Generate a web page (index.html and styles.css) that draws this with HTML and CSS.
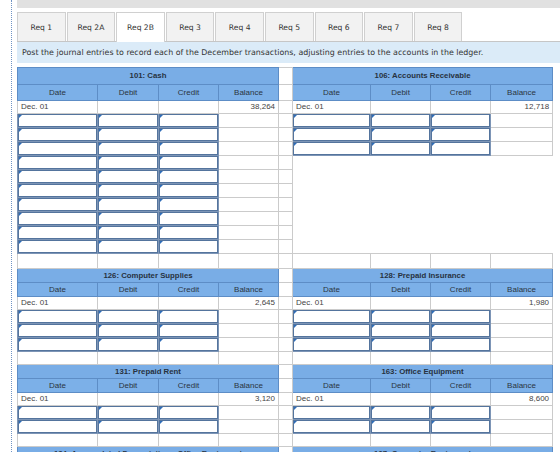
FILE: index.html
```html
<!DOCTYPE html>
<html lang="en">
<head>
    <meta charset="UTF-8">
    <title>General Ledger</title>
    <link rel="stylesheet" href="styles.css">
</head>
<body>
<div class="page">
    <div class="topbar"></div>
    <div class="tabs">
        <div class="tab">Req 1</div>
        <div class="tab">Req 2A</div>
        <div class="tab active">Req 2B</div>
        <div class="tab">Req 3</div>
        <div class="tab">Req 4</div>
        <div class="tab">Req 5</div>
        <div class="tab">Req 6</div>
        <div class="tab">Req 7</div>
        <div class="tab">Req 8</div>
    </div>
    <div class="instr">Post the journal entries to record each of the December transactions, adjusting entries to the accounts in the ledger.</div>

    <table class="ledger">
        <colgroup>
            <col style="width:80px"><col style="width:61px"><col style="width:60px"><col style="width:60px">
            <col style="width:14px">
            <col style="width:78px"><col style="width:60px"><col style="width:60px"><col style="width:62px">
        </colgroup>

        <!-- 101 / 106 -->
        <tr class="r-title first">
            <td class="title" colspan="4">101: Cash</td><td class="sp"></td><td class="title" colspan="4">106: Accounts Receivable</td>
        </tr>
        <tr class="r-head first">
            <th>Date</th><th>Debit</th><th>Credit</th><th>Balance</th><td class="sp"></td><th>Date</th><th>Debit</th><th>Credit</th><th>Balance</th>
        </tr>
        <tr class="r-open">
            <td>Dec. 01</td><td></td><td></td><td class="num">38,264</td><td class="sp"></td><td>Dec. 01</td><td></td><td></td><td class="num">12,718</td>
        </tr>
        <tr class="r-in">
            <td class="in"><span class="inp"></span></td><td class="in"><span class="inp"></span></td><td class="in"><span class="inp"></span></td><td></td><td class="sp"></td>
            <td class="in"><span class="inp"></span></td><td class="in"><span class="inp"></span></td><td class="in"><span class="inp"></span></td><td></td>
        </tr>
        <tr class="r-in">
            <td class="in"><span class="inp"></span></td><td class="in"><span class="inp"></span></td><td class="in"><span class="inp"></span></td><td></td><td class="sp"></td>
            <td class="in"><span class="inp"></span></td><td class="in"><span class="inp"></span></td><td class="in"><span class="inp"></span></td><td></td>
        </tr>
        <tr class="r-in">
            <td class="in"><span class="inp"></span></td><td class="in"><span class="inp"></span></td><td class="in"><span class="inp"></span></td><td></td><td class="sp"></td>
            <td class="in"><span class="inp"></span></td><td class="in"><span class="inp"></span></td><td class="in"><span class="inp"></span></td><td></td>
        </tr>
        <tr class="r-in">
            <td class="in"><span class="inp"></span></td><td class="in"><span class="inp"></span></td><td class="in"><span class="inp"></span></td><td></td><td class="sp"></td>
            <td class="none" colspan="4"></td>
        </tr>
        <tr class="r-in">
            <td class="in"><span class="inp"></span></td><td class="in"><span class="inp"></span></td><td class="in"><span class="inp"></span></td><td></td><td class="sp"></td>
            <td class="none" colspan="4"></td>
        </tr>
        <tr class="r-in">
            <td class="in"><span class="inp"></span></td><td class="in"><span class="inp"></span></td><td class="in"><span class="inp"></span></td><td></td><td class="sp"></td>
            <td class="none" colspan="4"></td>
        </tr>
        <tr class="r-in">
            <td class="in"><span class="inp"></span></td><td class="in"><span class="inp"></span></td><td class="in"><span class="inp"></span></td><td></td><td class="sp"></td>
            <td class="none" colspan="4"></td>
        </tr>
        <tr class="r-in">
            <td class="in"><span class="inp"></span></td><td class="in"><span class="inp"></span></td><td class="in"><span class="inp"></span></td><td></td><td class="sp"></td>
            <td class="none" colspan="4"></td>
        </tr>
        <tr class="r-in">
            <td class="in"><span class="inp"></span></td><td class="in"><span class="inp"></span></td><td class="in"><span class="inp"></span></td><td></td><td class="sp"></td>
            <td class="none" colspan="4"></td>
        </tr>
        <tr class="r-in">
            <td class="in"><span class="inp"></span></td><td class="in"><span class="inp"></span></td><td class="in"><span class="inp"></span></td><td></td><td class="sp"></td>
            <td class="none" colspan="4"></td>
        </tr>
        <tr class="r-blank first">
            <td></td><td></td><td></td><td></td><td class="sp"></td><td></td><td></td><td></td><td></td>
        </tr>

        <!-- 126 / 128 -->
        <tr class="r-title">
            <td class="title" colspan="4">126: Computer Supplies</td><td class="sp"></td><td class="title" colspan="4">128: Prepaid Insurance</td>
        </tr>
        <tr class="r-head">
            <th>Date</th><th>Debit</th><th>Credit</th><th>Balance</th><td class="sp"></td><th>Date</th><th>Debit</th><th>Credit</th><th>Balance</th>
        </tr>
        <tr class="r-open">
            <td>Dec. 01</td><td></td><td></td><td class="num">2,645</td><td class="sp"></td><td>Dec. 01</td><td></td><td></td><td class="num">1,980</td>
        </tr>
        <tr class="r-in">
            <td class="in"><span class="inp"></span></td><td class="in"><span class="inp"></span></td><td class="in"><span class="inp"></span></td><td></td><td class="sp"></td>
            <td class="in"><span class="inp"></span></td><td class="in"><span class="inp"></span></td><td class="in"><span class="inp"></span></td><td></td>
        </tr>
        <tr class="r-in">
            <td class="in"><span class="inp"></span></td><td class="in"><span class="inp"></span></td><td class="in"><span class="inp"></span></td><td></td><td class="sp"></td>
            <td class="in"><span class="inp"></span></td><td class="in"><span class="inp"></span></td><td class="in"><span class="inp"></span></td><td></td>
        </tr>
        <tr class="r-in">
            <td class="in"><span class="inp"></span></td><td class="in"><span class="inp"></span></td><td class="in"><span class="inp"></span></td><td></td><td class="sp"></td>
            <td class="in"><span class="inp"></span></td><td class="in"><span class="inp"></span></td><td class="in"><span class="inp"></span></td><td></td>
        </tr>
        <tr class="r-blank">
            <td></td><td></td><td></td><td></td><td class="sp"></td><td></td><td></td><td></td><td></td>
        </tr>

        <!-- 131 / 163 -->
        <tr class="r-title">
            <td class="title" colspan="4">131: Prepaid Rent</td><td class="sp"></td><td class="title" colspan="4">163: Office Equipment</td>
        </tr>
        <tr class="r-head">
            <th>Date</th><th>Debit</th><th>Credit</th><th>Balance</th><td class="sp"></td><th>Date</th><th>Debit</th><th>Credit</th><th>Balance</th>
        </tr>
        <tr class="r-open">
            <td>Dec. 01</td><td></td><td></td><td class="num">3,120</td><td class="sp"></td><td>Dec. 01</td><td></td><td></td><td class="num">8,600</td>
        </tr>
        <tr class="r-in">
            <td class="in"><span class="inp"></span></td><td class="in"><span class="inp"></span></td><td class="in"><span class="inp"></span></td><td></td><td class="sp"></td>
            <td class="in"><span class="inp"></span></td><td class="in"><span class="inp"></span></td><td class="in"><span class="inp"></span></td><td></td>
        </tr>
        <tr class="r-in">
            <td class="in"><span class="inp"></span></td><td class="in"><span class="inp"></span></td><td class="in"><span class="inp"></span></td><td></td><td class="sp"></td>
            <td class="in"><span class="inp"></span></td><td class="in"><span class="inp"></span></td><td class="in"><span class="inp"></span></td><td></td>
        </tr>
        <tr class="r-blank">
            <td></td><td></td><td></td><td></td><td class="sp"></td><td></td><td></td><td></td><td></td>
        </tr>

        <!-- 134 / 167 -->
        <tr class="r-title">
            <td class="title" colspan="4">134: Accumulated Depreciation—Office Equipment</td><td class="sp"></td><td class="title" colspan="4">167: Computer Equipment</td>
        </tr>
        <tr class="r-head">
            <th>Date</th><th>Debit</th><th>Credit</th><th>Balance</th><td class="sp"></td><th>Date</th><th>Debit</th><th>Credit</th><th>Balance</th>
        </tr>
    </table>
</div>
</body>
</html>
```

FILE: styles.css
```css
html, body {
    margin: 0;
    background: #fff;
    overflow: hidden;
}
body {
    font-family: "Liberation Sans", Arial, sans-serif;
    color: #333;
}
.page {
    margin-left: 11px;
    padding-left: 5px;
    border-left: 1px dotted #6f93c4;
    min-height: 600px;
}
.topbar {
    height: 8px;
    background: #e1e1e1;
}
.tabs {
    display: flex;
    gap: 1px;
    margin-top: 4px;
    height: 29px;
    border-bottom: 1px solid #c6c6c6;
}
.tab {
    width: 48.6px;
    box-sizing: border-box;
    border: 1px solid #d0d0d0;
    border-bottom: none;
    background: #f2f2f2;
    display: flex;
    align-items: center;
    justify-content: center;
    font-family: "DejaVu Sans", Verdana, sans-serif;
    font-size: 7.6px;
    color: #333;
}
.tab.active {
    background: #fff;
    height: 30px; /* covers the line under the tabs */
}
.instr {
    height: 21px;
    background: #dbebf8;
    padding-left: 5px;
    display: flex;
    align-items: center;
    font-family: "DejaVu Sans", Verdana, sans-serif;
    font-size: 7.9px;
    color: #333;
}
.ledger {
    margin-top: 4px;
    width: 535px;
    table-layout: fixed;
    border-collapse: collapse;
}
.ledger td, .ledger th {
    border: 1px solid #cbcbcb;
    padding: 0 3px;
    font-size: 8px;
    line-height: 1;
    white-space: nowrap;
    overflow: hidden;
    text-align: left;
    color: #444;
}
.ledger .title {
    background: #79ade6;
    border-color: #5d8dc6;
    text-align: center;
    font-weight: bold;
    font-size: 7.8px;
    color: #27323f;
}
.ledger th {
    background: #7cb0e8;
    border-color: #5d8dc6;
    text-align: center;
    font-weight: normal;
    color: #2b3541;
}
.ledger .num {
    text-align: right;
}
.ledger .sp {
    background: #fff;
}
.ledger .none {
    border: none;
}
.ledger .in {
    padding: 0;
    border-color: #7d95b6;
}
.inp {
    display: block;
    position: relative;
    height: 13px;
    border: 1px solid #54749d;
    box-sizing: border-box;
    background: #fff;
}
.inp::before {
    content: "";
    position: absolute;
    left: 0;
    top: 0;
    border-top: 3px solid #2f6db8;
    border-right: 3px solid transparent;
}
.r-title td { height: 13px; }
.r-title.first td { height: 16px; }
.r-head th, .r-head td { height: 13px; }
.r-head.first th, .r-head.first td { height: 15px; }
.r-open td { height: 12px; }
.r-in td { height: 13px; }
.r-blank td { height: 12px; }
.r-blank.first td { height: 14px; }
```
